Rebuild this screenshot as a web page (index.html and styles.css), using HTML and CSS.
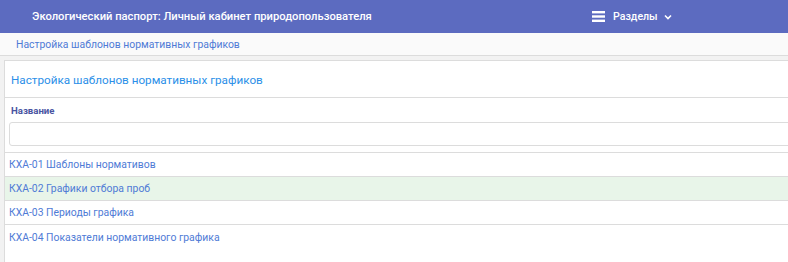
FILE: index.html
```html
<!DOCTYPE html>
<html>
<head>
  <meta charset="utf-8">
  <title>Настройка шаблонов нормативных графиков</title>
  <link rel="stylesheet" href="styles.css">
</head>
<body>
  <header class="topbar">
    <div class="topbar-title">Экологический паспорт: Личный кабинет природопользователя</div>
    <div class="topbar-menu">
      <svg class="menu-icon" width="13" height="11" viewBox="0 0 13 11">
        <rect x="0" y="0" width="13" height="2.4" fill="#fff"/>
        <rect x="0" y="4.3" width="13" height="2.4" fill="#fff"/>
        <rect x="0" y="8.6" width="13" height="2.4" fill="#fff"/>
      </svg>
      <span>Разделы</span>
      <svg class="caret" width="8" height="6" viewBox="0 0 8 6">
        <path d="M1 1.5 L4 4.5 L7 1.5" stroke="#fff" stroke-width="1.6" fill="none"/>
      </svg>
    </div>
  </header>

  <nav class="crumbs">
    <a href="#">Настройка шаблонов нормативных графиков</a>
  </nav>

  <main class="card">
    <h2 class="card-title">Настройка шаблонов нормативных графиков</h2>
    <div class="filter">
      <label for="name">Название</label>
      <input type="text" id="name">
    </div>
    <ul class="list">
      <li><a href="#">КХА-01 Шаблоны нормативов</a></li>
      <li class="active"><a href="#">КХА-02 Графики отбора проб</a></li>
      <li><a href="#">КХА-03 Периоды графика</a></li>
      <li><a href="#">КХА-04 Показатели нормативного графика</a></li>
    </ul>
  </main>
</body>
</html>
```

FILE: styles.css
```css
body {
  margin: 0;
  font-family: Roboto, "Liberation Sans", Arial, sans-serif;
  background-color: #f2f2f2;
  overflow: hidden;
  height: 262px;
}

.topbar {
  height: 33px;
  background-color: #5c6bc0;
  color: #fff;
  display: flex;
  align-items: center;
}

.topbar-title {
  padding-left: 32px;
  width: 560px;
  font-size: 11.2px;
  font-weight: 500;
}

.topbar-menu {
  display: flex;
  align-items: center;
  font-size: 10.6px;
  font-weight: 500;
}

.menu-icon {
  margin-right: 8px;
}

.caret {
  margin-left: 6px;
}

.crumbs {
  height: 22px;
  background-color: #fafafa;
  border-bottom: 1px solid #dcdcdc;
  padding-left: 16px;
  display: flex;
  align-items: center;
}

.crumbs a {
  font-size: 10.4px;
  color: #4f7bd6;
  text-decoration: none;
}

.card {
  margin: 4px -10px 0 4px;
  background-color: #fff;
  border: 1px solid #dcdcdc;
  min-height: 220px;
}

.card-title {
  margin: 0;
  height: 37px;
  box-sizing: border-box;
  padding: 2px 6px 0 6px;
  display: flex;
  align-items: center;
  font-size: 11.7px;
  font-weight: 400;
  color: #2b8fe8;
  border-bottom: 1px solid #dcdcdc;
}

.filter {
  padding: 7px 4px 6px 4px;
  border-bottom: 1px solid #dcdcdc;
}

.filter label {
  display: block;
  padding-left: 2px;
  font-size: 9.6px;
  font-weight: 700;
  color: #4a55a2;
  margin-bottom: 6px;
}

.filter input {
  display: block;
  width: 100%;
  height: 24px;
  box-sizing: border-box;
  border: 1px solid #dcdcdc;
  border-radius: 3px;
}

.list {
  list-style: none;
  margin: 0;
  padding: 0;
}

.list li {
  height: 24px;
  box-sizing: border-box;
  border-bottom: 1px solid #dcdcdc;
  padding-left: 4px;
  display: flex;
  align-items: center;
}

.list li:last-child {
  border-bottom: none;
}

.list li.active {
  background-color: #e8f5e9;
}

.list a {
  font-size: 10.4px;
  color: #4f7bd6;
  text-decoration: none;
}
```
